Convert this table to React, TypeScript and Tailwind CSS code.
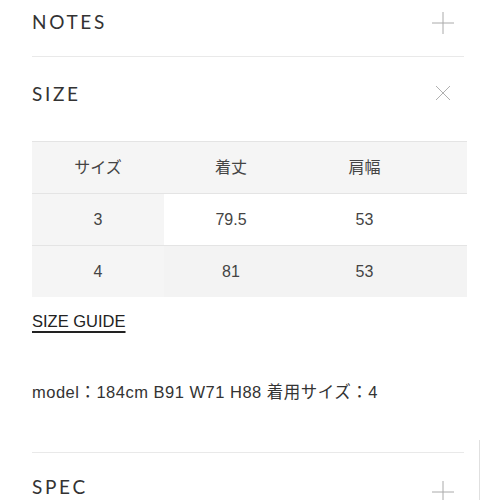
import React from "react";

const Plus = () => (
  <svg width="22" height="22" viewBox="0 0 22 22" className="block">
    <path d="M11 0V22M0 11H22" stroke="#aaaaaa" strokeWidth="1" fill="none" />
  </svg>
);

const Cross = () => (
  <svg width="16" height="16" viewBox="0 0 16 16" className="block">
    <path d="M1 1L15 15M15 1L1 15" stroke="#b0b0b0" strokeWidth="1" fill="none" />
  </svg>
);

const heading = "text-[19px] tracking-[0.14em] text-[#333] leading-none";
const headFont = { fontFamily: "Lato, 'Open Sans', sans-serif" };

export default function App() {
  const rows = [
    { s: "3", l: "79.5", w: "53", alt: false },
    { s: "4", l: "81", w: "53", alt: true },
  ];
  return (
    <div
      className="w-[500px] h-[500px] overflow-hidden bg-white relative"
      style={{ fontFamily: "'Liberation Sans', Arial, 'Noto Sans CJK JP', sans-serif" }}
    >
      <div className="pl-[32px] pr-[36px]">
        <div className="h-[57px] flex items-start justify-between pt-[12px] border-b border-[#e9e9e9]">
          <span className={heading} style={headFont}>NOTES</span>
          <div className="pr-[10px]"><Plus /></div>
        </div>
        <div className="h-[84px] flex items-start justify-between pt-[27px]">
          <span className={heading} style={headFont}>SIZE</span>
          <div className="pr-[13px] mt-[1px]"><Cross /></div>
        </div>
      </div>
      <div className="ml-[32px] w-[435px] text-[16px] text-[#444]">
        <div className="grid grid-cols-[132px_134px_133px_36px] h-[52px] bg-[#f5f5f5] border-t border-[#e4e4e4] items-center">
          <div className="text-center">サイズ</div>
          <div className="text-center">着丈</div>
          <div className="text-center">肩幅</div>
          <div />
        </div>
        {rows.map((r) => (
          <div
            key={r.s}
            className={`grid grid-cols-[132px_134px_133px_36px] h-[52px] border-t border-[#e4e4e4] items-center ${r.alt ? "bg-[#f3f3f3]" : "bg-white"}`}
          >
            <div className="text-center bg-[#f5f5f5] h-full flex items-center justify-center">{r.s}</div>
            <div className="text-center">{r.l}</div>
            <div className="text-center">{r.w}</div>
            <div />
          </div>
        ))}
      </div>
      <div className="pl-[32px] pt-[13px]">
        <span className="text-[16.5px] text-[#222] underline decoration-[2px] underline-offset-[4px] leading-none">SIZE GUIDE</span>
      </div>
      <div className="pl-[32px] pt-[50px] text-[16.5px] tracking-[0.5px] text-[#333] leading-none">
        model：184cm B91 W71 H88 着用サイズ：4
      </div>
      <div className="pl-[32px] pr-[36px] mt-[51px]">
        <div className="border-t border-[#e9e9e9] flex items-start justify-between pt-[24px]">
          <span className={heading} style={headFont}>SPEC</span>
          <div className="pr-[10px] pt-[4px]"><Plus /></div>
        </div>
      </div>
      <div className="absolute left-[479px] top-[440px] w-px h-[60px] bg-[#e0e0e0]" />
    </div>
  );
}
